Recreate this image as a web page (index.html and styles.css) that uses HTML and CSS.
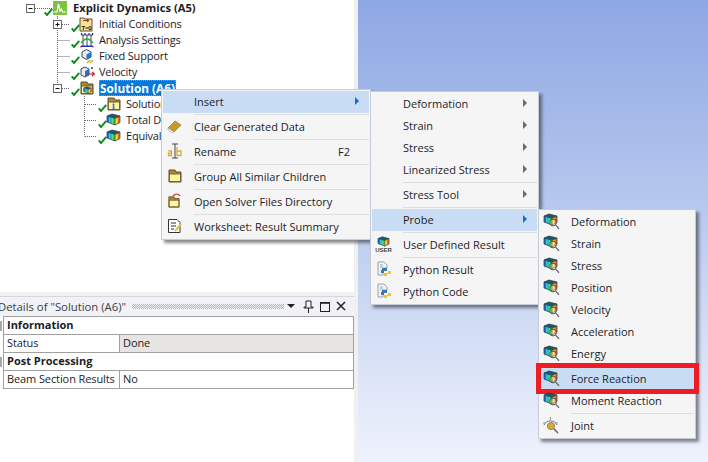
FILE: index.html
```html
<!DOCTYPE html>
<html lang="en">
<head>
<meta charset="utf-8">
<title>Solution context menu</title>
<link rel="stylesheet" href="styles.css">
</head>
<body>
<svg class="defs" width="0" height="0" aria-hidden="true">
  <defs>
    <symbol id="check" viewBox="0 0 9 8"><path d="M0.7 4.3 L3 7 L8.3 0.8" fill="none" stroke="#0f8f1f" stroke-width="2"/></symbol>
    <symbol id="cube" viewBox="0 0 15 13">
      <path d="M1 3 L6 1 L14 3 L9 5.5 Z" fill="#1a5a70"/>
      <path d="M1 3 L3.5 3.8 L3.5 9.9 L1 9 Z" fill="#1c6fe0"/>
      <path d="M3.5 3.8 L6.5 4.7 L6.5 11 L3.5 9.9 Z" fill="#18c8b0"/>
      <path d="M6.5 4.7 L9 5.5 L9 12 L6.5 11 Z" fill="#38d040"/>
      <path d="M9 5.5 L11.5 4.3 L11.5 10.7 L9 12 Z" fill="#f4e020"/>
      <path d="M11.5 4.3 L14 3 L14 9.5 L11.5 10.7 Z" fill="#f06a18"/>
      <path d="M1 3 L6 1 L14 3 L14 9.5 L9 12 L1 9 Z M1 3 L9 5.5 L14 3 M9 5.5 V12" fill="none" stroke="#26343c" stroke-width=".7"/>
    </symbol>
    <symbol id="probe" viewBox="0 0 17 17">
      <use href="#cube" x="0" y="0" width="15" height="13"/>
      <circle cx="10" cy="9.5" r="3.4" fill="#fff" fill-opacity=".25" stroke="#50504c"/>
      <path d="M12.6 12.1 L16 15.8" stroke="#666" stroke-width="1.3"/>
    </symbol>
    <symbol id="folder" viewBox="0 0 14 14">
      <path d="M1 3 L1 1 L7 1 L8 3 H13 V13 H1 Z" fill="#b3872c" stroke="#5c5030"/>
      <path d="M1.5 5 H12.5 V12.5 H1.5 Z" fill="#fff59c" stroke="#5c5030" stroke-width=".8"/>
    </symbol>
    <symbol id="arrow" viewBox="0 0 4 8"><path d="M0 0 L4 4 L0 8 Z"/></symbol>
    <symbol id="python" viewBox="0 0 16 16">
      <path d="M2 1 H8 L11 4 V7 H7 V14 H2 Z" fill="#f2f4f8" stroke="#9aa0a8"/>
      <path d="M4 4 H7 M4 6 H7" stroke="#a0a6b0"/>
      <path d="M6 9 V7 H11 V10 H8 V12 H5 V9 Z" fill="#3a78b0"/>
      <path d="M15 10 V13 H11 V15 H8 V12 H12 V10 Z" fill="#f2c230"/>
    </symbol>
  </defs>
</svg>

<div class="stage">
  <section class="left">
    <div class="tree">
      <svg class="tree-lines" width="110" height="145" aria-hidden="true">
        <path class="dots" d="M35 8.5 H53 M57.5 16 V84 M62 24.5 H70 M57.5 40.5 H70 M57.5 56.5 H70 M57.5 72.5 H70 M62 88.5 H70 M84.5 96 V136.5 M85 104.5 H97 M85 120.5 H97 M85 136.5 H97"/>
        <rect class="box" x="26.5" y="4.5" width="8" height="8"/><path class="sign" d="M28.5 8.5 H32.5"/>
        <rect class="box" x="53.5" y="20.5" width="8" height="8"/><path class="sign" d="M55.5 24.5 H59.5 M57.5 22.5 V26.5"/>
        <rect class="box" x="53.5" y="84.5" width="8" height="8"/><path class="sign" d="M55.5 88.5 H59.5"/>
      </svg>
      <div class="row root">
        <svg class="node" width="24" height="16" aria-hidden="true"><use href="#check" x="0" y="8" width="9" height="8"/><rect x="9" y="1" width="14" height="14" fill="#7fc243"/><path d="M10 12 H13 L14.5 4 L16 11 L17.5 9 L18.5 12 H22" fill="none" stroke="#fff" stroke-width="1.2"/></svg>
        <span class="label strong">Explicit Dynamics (A5)</span>
      </div>
      <div class="row one">
        <svg class="node" width="24" height="16" aria-hidden="true"><use href="#check" x="0" y="8" width="9" height="8"/><path d="M9 2 H13 L14 3 H21 V15 H9 Z" fill="#f5e39a" stroke="#5c5030"/><path d="M12 4.5 H18 M16 3 L18 4.5 L16 6" fill="none" stroke="#b03020"/><text x="10.5" y="13.5" class="tiny">T=0</text></svg>
        <span class="label">Initial Conditions</span>
      </div>
      <div class="row one">
        <svg class="node" width="24" height="16" aria-hidden="true"><use href="#check" x="0" y="8" width="9" height="8"/><path d="M10 3 H22 M10 14 H22 M12 3 V14 M16 3 V14 M20 3 V14" fill="none" stroke="#444"/><path d="M10.5 1 V3 M14 1 V3 M18 1 V3 M21.5 1 V3 M9.5 14.5 H22" stroke="#1c2fc0" stroke-width="1.2"/><path d="M10 11 Q16 3 22 11" fill="none" stroke="#20b040" stroke-width="1.4"/><path d="M10 14 V15.5 M22 14 V15.5" stroke="#d02020"/></svg>
        <span class="label">Analysis Settings</span>
      </div>
      <div class="row one">
        <svg class="node" width="24" height="16" aria-hidden="true"><use href="#check" x="0" y="8" width="9" height="8"/><path d="M11 4 L15.5 1.5 L20 4 L20 9 L15.5 11.5 L11 9 Z" fill="#e8ecf0" stroke="#445"/><path d="M15.5 6.5 L20 4 L20 9 L15.5 11.5 Z" fill="#1f78d0"/><path d="M16 15 L19 12 M19 15 L22 12" stroke="#d2a63a" stroke-width="1.4"/></svg>
        <span class="label">Fixed Support</span>
      </div>
      <div class="row one">
        <svg class="node" width="24" height="16" aria-hidden="true"><use href="#check" x="0" y="8" width="9" height="8"/><path d="M10 5 L14 3 L18 5 L18 11 L14 13 L10 11 Z" fill="#e8ecf0" stroke="#445"/><path d="M14 7 L18 5 L18 11 L14 13 Z" fill="#1f78d0"/><path d="M16 10 H23 M21 8 L23.5 10 L21 12" fill="none" stroke="#e01818" stroke-width="1.2"/><path d="M20 3 L22 5 M22 3 L20 5" stroke="#667"/></svg>
        <span class="label">Velocity</span>
      </div>
      <div class="row one">
        <svg class="node" width="24" height="16" aria-hidden="true"><use href="#check" x="0" y="8" width="9" height="8"/><use href="#folder" x="9" y="1" width="14" height="14"/><use href="#cube" x="12" y="6" width="9" height="8"/></svg>
        <span class="label strong selected">Solution (A6)</span>
      </div>
      <div class="row two">
        <svg class="node" width="24" height="16" aria-hidden="true"><use href="#check" x="0" y="8" width="9" height="8"/><use href="#folder" x="9" y="1" width="14" height="14"/><text x="14" y="13" class="info">i</text></svg>
        <span class="label">Solution</span>
      </div>
      <div class="row two">
        <svg class="node" width="24" height="16" aria-hidden="true"><use href="#check" x="0" y="8" width="9" height="8"/><use href="#cube" x="8" y="1" width="15" height="13"/></svg>
        <span class="label">Total D</span>
      </div>
      <div class="row two">
        <svg class="node" width="24" height="16" aria-hidden="true"><use href="#check" x="0" y="8" width="9" height="8"/><use href="#cube" x="8" y="1" width="15" height="13"/></svg>
        <span class="label">Equival</span>
      </div>
    </div>

    <div class="details">
      <div class="details-head">
        <span class="details-title">Details of "Solution (A6)"</span>
        <span class="grip"></span>
        <svg class="head-icons" width="60" height="14" aria-hidden="true">
          <path d="M0 4 H8 L4 8 Z" fill="#222"/>
          <path d="M19 1 H24 V7 H26 V8 H17 V7 H19 Z M21.5 8 V13" fill="none" stroke="#222"/>
          <rect x="33.5" y="2.5" width="9" height="9" fill="none" stroke="#222"/><path d="M33 3 H43" stroke="#222" stroke-width="1.6"/>
          <path d="M50 2 L58 10 M58 2 L50 10" stroke="#222" stroke-width="1.5"/>
        </svg>
      </div>
      <div class="details-body">
        <div class="gutter"><span class="mark"></span><span class="mark"></span></div>
        <table class="props">
          <colgroup><col class="col-key"><col class="col-val"></colgroup>
          <tr><th colspan="2">Information</th></tr>
          <tr><td>Status</td><td class="readonly">Done</td></tr>
          <tr><th colspan="2">Post Processing</th></tr>
          <tr><td>Beam Section Results</td><td>No</td></tr>
        </table>
      </div>
    </div>
  </section>
  <div class="divider"></div>
  <div class="viewport"></div>

  <nav class="menu menu-main">
    <div class="item active"><span class="ic"></span><span class="txt">Insert</span><svg class="arr blue" width="4" height="8"><use href="#arrow"/></svg></div>
    <div class="sep"></div>
    <div class="item"><span class="ic"><svg width="16" height="16" aria-hidden="true"><path d="M1 10 L8 3 L14 7 L7 14 Z" fill="#c49a28" stroke="#8c6d18" stroke-width=".6"/><path d="M1 10 L7 14 L5 15 L1 12 Z" fill="#eee" stroke="#aaa" stroke-width=".6"/></svg></span><span class="txt">Clear Generated Data</span></div>
    <div class="sep"></div>
    <div class="item"><span class="ic"><svg width="16" height="16" aria-hidden="true"><path d="M5 1 H11 M8 1 V15 M5 15 H11" stroke="#444" fill="none"/><path d="M1.5 8 H4.5 V12.5 H1.5 V10.2 H4.5 M10 4 V12.5 H14 V8 H10" fill="none" stroke="#d9a93a" stroke-width="1.3"/></svg></span><span class="txt">Rename</span><span class="key-hint">F2</span></div>
    <div class="sep"></div>
    <div class="item"><span class="ic"><svg width="14" height="14" aria-hidden="true"><use href="#folder"/></svg></span><span class="txt">Group All Similar Children</span></div>
    <div class="sep"></div>
    <div class="item"><span class="ic"><svg width="16" height="16" aria-hidden="true"><use href="#folder" x="1" y="3" width="12" height="12"/><path d="M6 3 Q10 -1 13 3" fill="none" stroke="#e02020" stroke-width="1.2"/></svg></span><span class="txt">Open Solver Files Directory</span></div>
    <div class="sep"></div>
    <div class="item"><span class="ic"><svg width="16" height="16" aria-hidden="true"><path d="M1.5 1.5 H10 L13 4.5 V14.5 H1.5 Z" fill="#fff" stroke="#333"/><path d="M4 5 H9 M4 8 H9 M4 11 H7" stroke="#333"/><path d="M8 13 L14 6" stroke="#e2c24a" stroke-width="2"/></svg></span><span class="txt">Worksheet: Result Summary</span></div>
  </nav>

  <nav class="menu menu-insert">
    <div class="item"><span class="ic"></span><span class="txt">Deformation</span><svg class="arr" width="4" height="8"><use href="#arrow"/></svg></div>
    <div class="item"><span class="ic"></span><span class="txt">Strain</span><svg class="arr" width="4" height="8"><use href="#arrow"/></svg></div>
    <div class="item"><span class="ic"></span><span class="txt">Stress</span><svg class="arr" width="4" height="8"><use href="#arrow"/></svg></div>
    <div class="item"><span class="ic"></span><span class="txt">Linearized Stress</span><svg class="arr" width="4" height="8"><use href="#arrow"/></svg></div>
    <div class="sep"></div>
    <div class="item"><span class="ic"></span><span class="txt">Stress Tool</span><svg class="arr" width="4" height="8"><use href="#arrow"/></svg></div>
    <div class="sep"></div>
    <div class="item active"><span class="ic"></span><span class="txt">Probe</span><svg class="arr blue" width="4" height="8"><use href="#arrow"/></svg></div>
    <div class="sep"></div>
    <div class="item"><span class="ic user"><svg width="15" height="11" aria-hidden="true"><use href="#cube"/></svg><span class="user-tag">USER</span></span><span class="txt">User Defined Result</span></div>
    <div class="sep"></div>
    <div class="item"><span class="ic"><svg width="16" height="16" aria-hidden="true"><use href="#python"/></svg></span><span class="txt">Python Result</span></div>
    <div class="item"><span class="ic"><svg width="16" height="16" aria-hidden="true"><use href="#python"/></svg></span><span class="txt">Python Code</span></div>
  </nav>

  <nav class="menu menu-probe">
    <div class="item"><span class="ic"><svg width="17" height="17" aria-hidden="true"><use href="#probe"/></svg></span><span class="txt">Deformation</span></div>
    <div class="item"><span class="ic"><svg width="17" height="17" aria-hidden="true"><use href="#probe"/></svg></span><span class="txt">Strain</span></div>
    <div class="item"><span class="ic"><svg width="17" height="17" aria-hidden="true"><use href="#probe"/></svg></span><span class="txt">Stress</span></div>
    <div class="item"><span class="ic"><svg width="17" height="17" aria-hidden="true"><use href="#probe"/></svg></span><span class="txt">Position</span></div>
    <div class="item"><span class="ic"><svg width="17" height="17" aria-hidden="true"><use href="#probe"/></svg></span><span class="txt">Velocity</span></div>
    <div class="item"><span class="ic"><svg width="17" height="17" aria-hidden="true"><use href="#probe"/></svg></span><span class="txt">Acceleration</span></div>
    <div class="item"><span class="ic"><svg width="17" height="17" aria-hidden="true"><use href="#probe"/></svg></span><span class="txt">Energy</span></div>
    <div class="sep"></div>
    <div class="item active callout"><span class="ic"><svg width="17" height="17" aria-hidden="true"><use href="#probe"/></svg></span><span class="txt">Force Reaction</span></div>
    <div class="item"><span class="ic"><svg width="17" height="17" aria-hidden="true"><use href="#probe"/></svg></span><span class="txt">Moment Reaction</span></div>
    <div class="sep"></div>
    <div class="item"><span class="ic"><svg width="17" height="17" aria-hidden="true"><path d="M1 8 A7 6.5 0 0 1 14 8" fill="none" stroke="#777"/><path d="M7.5 0 V3 M0 6 H3 M12 6 H15" stroke="#999"/><circle cx="8" cy="9" r="3.6" fill="#e0a828" stroke="#888"/><path d="M10.8 11.8 L15 16" stroke="#555" stroke-width="1.3"/></svg></span><span class="txt">Joint</span></div>
  </nav>
</div>
</body>
</html>
```
FILE: styles.css
```css
* { box-sizing: border-box; }
html, body { margin: 0; padding: 0; }
body { font-family: "Open Sans", "Noto Sans", sans-serif; font-size: 11px; color: #1c1c28; }
.defs { position: absolute; }
.stage { position: relative; display: flex; width: 708px; height: 462px; overflow: hidden; background: #fff; }

.left { width: 354px; display: flex; flex-direction: column; background: #fff; overflow: hidden; }
.divider { width: 4px; background: #f0f0f0; }
.viewport { flex: 1; background: linear-gradient(180deg, #8ea8e4 0%, #a9bdea 30%, #ccd8f3 65%, #eef2fc 100%); }

/* tree */
.tree { position: relative; height: 292px; }
.tree-lines { position: absolute; left: 0; top: 0; }
.dots { fill: none; stroke: #666; stroke-dasharray: 1 1; }
.box { fill: #fff; stroke: #666; }
.sign { stroke: #111; fill: none; }
.row { display: flex; align-items: center; height: 16px; position: relative; letter-spacing: -0.2px; }
.root { padding-left: 44px; }
.one { padding-left: 71px; }
.two { padding-left: 98px; }
.node { flex: none; margin-right: 4px; }
.root .node { margin-right: 5px; }
.label { white-space: nowrap; line-height: 16px; }
.strong { font-weight: 700; letter-spacing: 0; font-size: 11.2px; }
.selected { background: #0a78d7; color: #fff; outline: 1px dotted #e08a20; outline-offset: -1px; padding: 0 1px; font-size: 11.8px; }
.tiny { font: 700 6px "Liberation Sans", sans-serif; fill: #222; }
.info { font: 700 10px "Liberation Serif", serif; fill: #2a6fd0; }

/* details */
.details { flex: 1; background: #fff; border-top: 4px solid #f0f0f0; }
.details-head { display: flex; align-items: center; height: 20px; background: #f1f2f6; border-top: 1px solid #d4d7e0; color: #3c3c44; }
.details-title { margin-left: -2px; font-size: 11.3px; white-space: nowrap; }
.grip { flex: 1; height: 5px; margin: 0 3px 0 6px; background: conic-gradient(#b4b4b4 25%, transparent 0 50%, #b4b4b4 0 75%, transparent 0) 0 0 / 2px 2px; }
.head-icons { flex: none; margin-right: 7px; }
.details-body { display: flex; }
.gutter { width: 3px; display: flex; flex-direction: column; gap: 26px; padding-top: 5px; }
.mark { display: block; width: 2px; height: 10px; background: #a8a8a8; }
.props { width: 351px; border-collapse: collapse; table-layout: fixed; }
.col-key { width: 116px; }
.props th, .props td { height: 18px; padding: 0 3px 2px; border: 1px solid #a0a0a0; text-align: left; white-space: nowrap; line-height: 15px; }
.props td { letter-spacing: -0.1px; }
.props th { font-weight: 700; }
.props .readonly { background: #e6e5e1; }

/* context menus */
.menu { position: absolute; background: #f5f5f5; border: 1px solid #c6cbd8; padding: 1px; box-shadow: 3px 3px 3px rgba(40, 40, 50, .55); }
.menu-main { left: 161px; top: 89px; width: 210px; }
.menu-insert { left: 370px; top: 91px; width: 169px; }
.menu-probe { left: 538px; top: 209px; width: 158px; }
.item { display: flex; align-items: center; height: 22px; padding-bottom: 2px; white-space: nowrap; position: relative; }
.item.active { background: #c8dcf4; }
.ic { flex: none; width: 31px; display: flex; align-items: center; justify-content: center; padding-right: 8px; }
.txt { flex: 1; }
.arr { flex: none; margin-right: 10px; fill: #6a6a6a; }
.arr.blue { fill: #0f6fd8; }
.key-hint { margin-right: 19px; }
.sep { height: 1px; margin: 1px 0 1px 31px; background: #dedede; }
.user { flex-direction: column; }
.user-tag { font: 700 6px "Liberation Sans", sans-serif; color: #444; line-height: 6px; }
.callout::after { content: ""; position: absolute; left: -4px; right: -5px; top: -5px; bottom: -4px; border: 5px solid #ee1c25; }
```
